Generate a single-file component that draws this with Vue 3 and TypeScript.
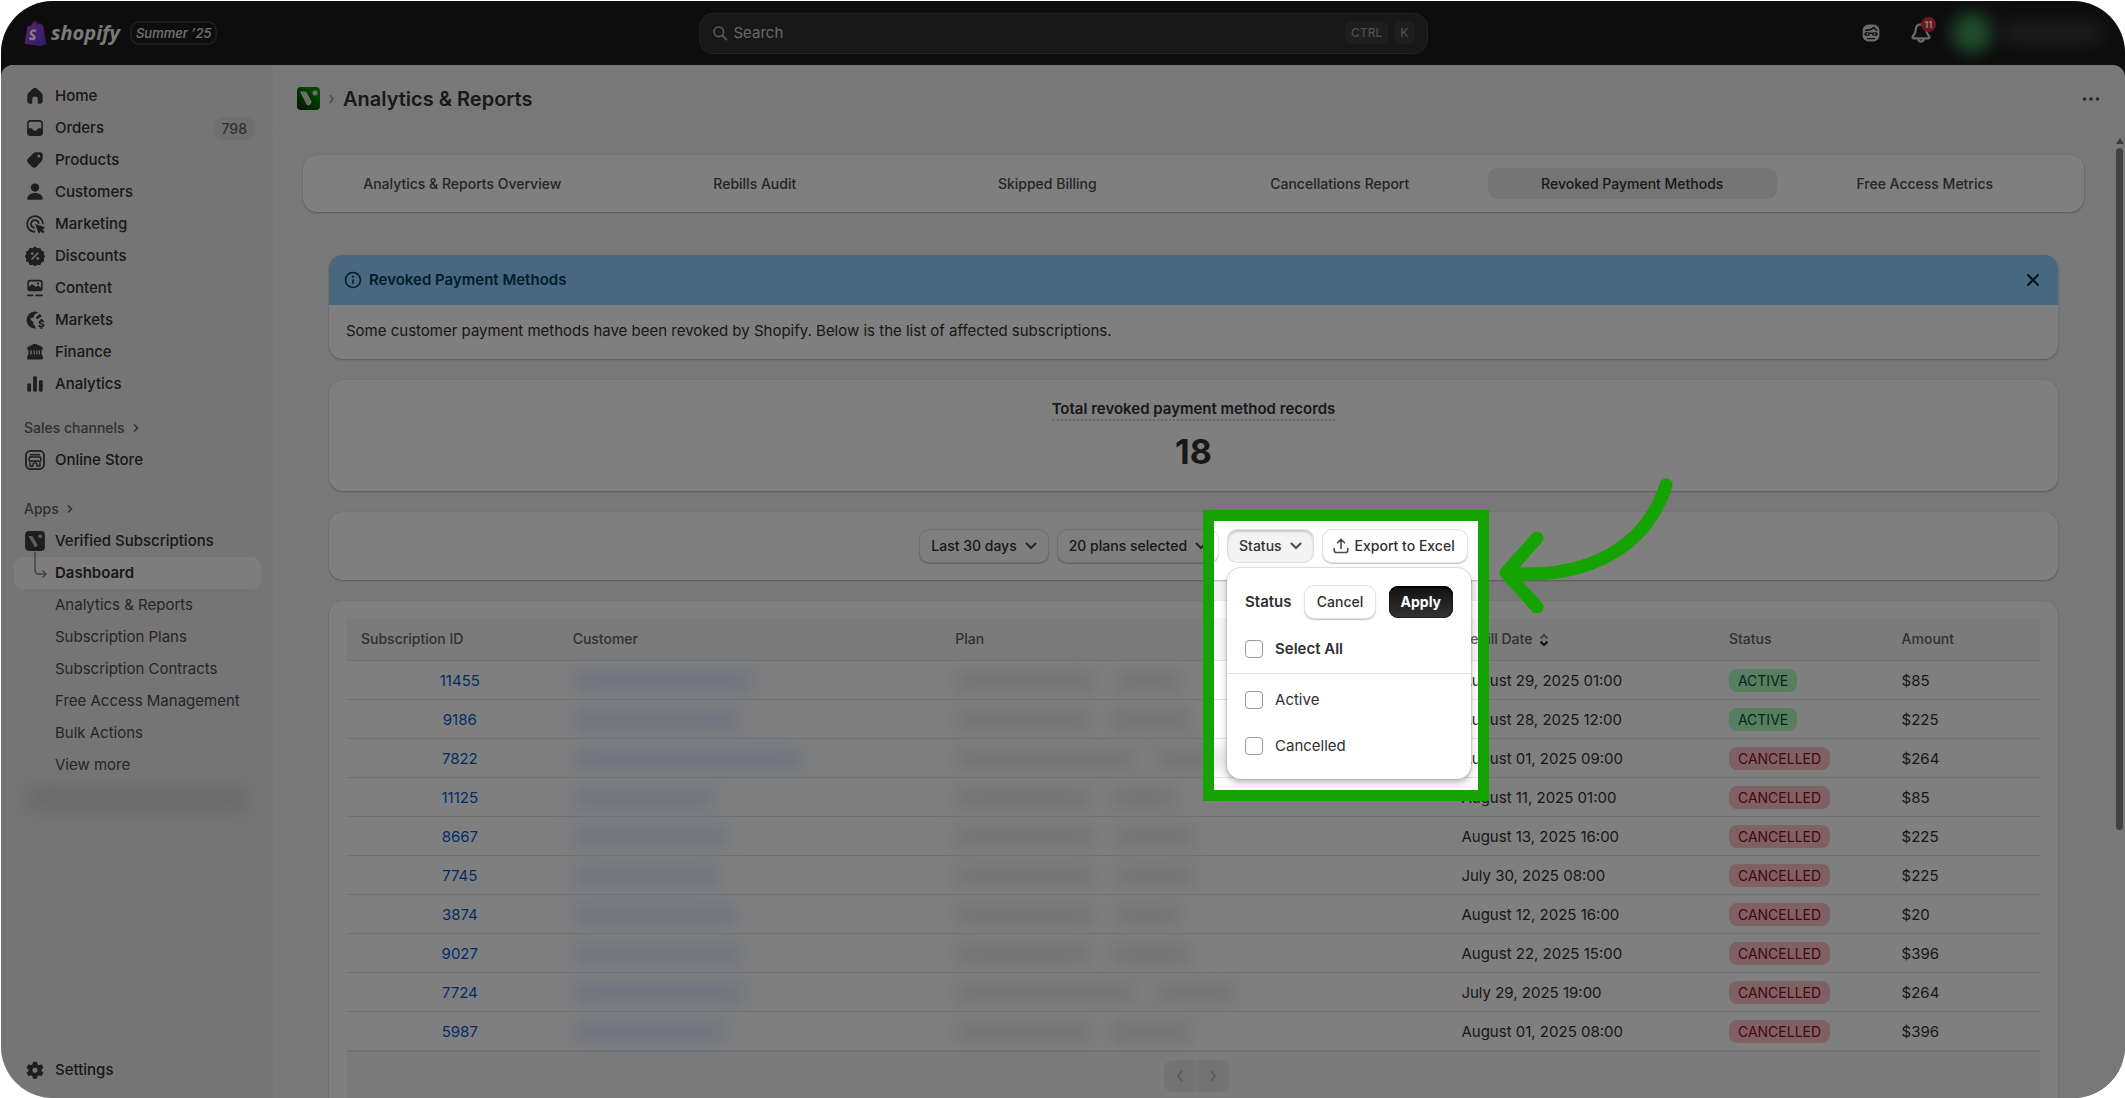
<script setup lang="ts">
import { ref } from 'vue'

interface NavItem { label: string; icon: string; badge?: string }
interface Row {
  id: string
  date: string
  status: 'ACTIVE' | 'CANCELLED'
  amount: string
  customer: number
  plan: [number, number]
}

const nav: NavItem[] = [
  { label: 'Home', icon: 'home' },
  { label: 'Orders', icon: 'orders', badge: '798' },
  { label: 'Products', icon: 'products' },
  { label: 'Customers', icon: 'customers' },
  { label: 'Marketing', icon: 'marketing' },
  { label: 'Discounts', icon: 'discounts' },
  { label: 'Content', icon: 'content' },
  { label: 'Markets', icon: 'markets' },
  { label: 'Finance', icon: 'finance' },
  { label: 'Analytics', icon: 'analytics' },
]

const appLinks = [
  'Analytics & Reports',
  'Subscription Plans',
  'Subscription Contracts',
  'Free Access Management',
  'Bulk Actions',
  'View more',
]

const tabs = [
  'Analytics & Reports Overview',
  'Rebills Audit',
  'Skipped Billing',
  'Cancellations Report',
  'Revoked Payment Methods',
  'Free Access Metrics',
]
const activeTab = ref('Revoked Payment Methods')

const rows: Row[] = [
  { id: '11455', date: 'August 29, 2025 01:00', status: 'ACTIVE', amount: '$85', customer: 180, plan: [140, 66] },
  { id: '9186', date: 'August 28, 2025 12:00', status: 'ACTIVE', amount: '$225', customer: 166, plan: [136, 80] },
  { id: '7822', date: 'August 01, 2025 09:00', status: 'CANCELLED', amount: '$264', customer: 230, plan: [180, 80] },
  { id: '11125', date: 'August 11, 2025 01:00', status: 'CANCELLED', amount: '$85', customer: 142, plan: [136, 66] },
  { id: '8667', date: 'August 13, 2025 16:00', status: 'CANCELLED', amount: '$225', customer: 154, plan: [140, 80] },
  { id: '7745', date: 'July 30, 2025 08:00', status: 'CANCELLED', amount: '$225', customer: 146, plan: [140, 80] },
  { id: '3874', date: 'August 12, 2025 16:00', status: 'CANCELLED', amount: '$20', customer: 164, plan: [140, 66] },
  { id: '9027', date: 'August 22, 2025 15:00', status: 'CANCELLED', amount: '$396', customer: 168, plan: [136, 80] },
  { id: '7724', date: 'July 29, 2025 19:00', status: 'CANCELLED', amount: '$264', customer: 172, plan: [180, 80] },
  { id: '5987', date: 'August 01, 2025 08:00', status: 'CANCELLED', amount: '$396', customer: 154, plan: [136, 80] },
]

const selectAll = ref(false)
const statuses = ref([
  { label: 'Active', checked: false },
  { label: 'Cancelled', checked: false },
])
</script>

<template>
  <div class="frame">
    <header class="topbar">
      <div class="brand">
        <svg class="bag" viewBox="0 0 24 28" aria-hidden="true">
          <defs>
            <linearGradient id="bagFill" x1="0" y1="0" x2="1" y2="1">
              <stop offset="0" stop-color="#c04fd8" />
              <stop offset="1" stop-color="#5a34d6" />
            </linearGradient>
          </defs>
          <path d="M3.5 7 L8 5.5 C8.6 2.6 10.2 1 12 1.2 C13 1.4 13.8 2.6 14.2 4 L17 3.4 L20 5.6 L23.4 25.4 L16.5 27 L0.6 24.6 Z" fill="url(#bagFill)" />
          <path d="M7.6 6.5 C8 3.6 9.8 2 11.4 2.2 C12.6 2.6 13.1 4.2 13.2 6.2" fill="none" stroke="#7a2a86" stroke-width="1.1" />
          <path d="M12.6 11.4 C10.8 10.4 7.4 10.8 7.2 13.2 C7.1 15.8 11 15.9 10.9 18.2 C10.8 20.2 8 20.4 5.6 18.6" fill="none" stroke="#fff" stroke-width="2.6" />
        </svg>
        <span class="wordmark">shopify</span>
        <span class="edition">Summer ’25</span>
      </div>
      <label class="search">
        <svg viewBox="0 0 20 20" class="search-icon" aria-hidden="true">
          <circle cx="8.5" cy="8.5" r="6" /><path d="M13 13l5 5.4" />
        </svg>
        <input type="text" placeholder="Search" aria-label="Search" />
        <kbd>CTRL</kbd><kbd>K</kbd>
      </label>
      <div class="account">
        <button class="icon-btn" aria-label="Assistant">
          <svg viewBox="0 0 20 20" class="sidekick" aria-hidden="true">
            <rect x="1.6" y="1.4" width="16.8" height="17.2" rx="6" fill="#d9d9d9" />
            <path d="M4 7.2 C7 7.4 11 6.6 13 4.6 C13.6 6 15 7 16.4 7.2" fill="none" stroke="#1a1a1a" stroke-width="1.4" />
            <rect x="3.4" y="9.2" width="5.4" height="3.6" rx="1.6" fill="#1a1a1a" />
            <rect x="11.2" y="9.2" width="5.4" height="3.6" rx="1.6" fill="#1a1a1a" />
            <path d="M8.5 10.2h3M6 15.6h8" stroke="#1a1a1a" stroke-width="1.4" />
            <circle cx="6.4" cy="11" r=".9" fill="#d9d9d9" /><circle cx="13.6" cy="11" r=".9" fill="#d9d9d9" />
          </svg>
        </button>
        <button class="icon-btn bell-btn" aria-label="Notifications">
          <svg viewBox="0 0 20 20" class="bell" aria-hidden="true">
            <path d="M10 2.2c-3 0-4.6 2.2-4.8 4.8-.1 2-.5 3.400-1.6 4.600-.9 1-1.300 1.600-1.300 2.300 0 .6.4.9 1 .9h13.400c.6 0 1-.3 1-.9 0-.7-.4-1.300-1.300-2.300-1.100-1.200-1.500-2.600-1.600-4.600C14.600 4.400 13 2.200 10 2.200z" />
            <path d="M7.400 15.200c.3 1.700 1.300 2.600 2.600 2.600s2.300-.9 2.600-2.600" />
          </svg>
          <span class="count">11</span>
        </button>
        <span class="avatar-blur"></span>
        <span class="name-blur"></span>
      </div>
    </header>

    <div class="body">
      <nav class="sidebar">
        <a v-for="item in nav" :key="item.label" href="#" class="nav-item">
          <svg class="nav-icon" viewBox="0 0 20 20" aria-hidden="true">
            <path v-if="item.icon === 'home'" d="M8.300 3.200a2.500 2.500 0 0 1 3.400 0l4.300 4c.6.6 1 1.400 1 2.300v5A2.500 2.500 0 0 1 14.500 17H13.200a.7.7 0 0 1-.7-.7V13a2.500 2.500 0 0 0-5 0v3.300a.7.7 0 0 1-.7.7H5.500A2.500 2.500 0 0 1 3 14.500v-5c0-.9.4-1.700 1-2.300z" />
            <path v-else-if="item.icon === 'orders'" fill-rule="evenodd" d="M6 2.700h8A3.200 3.200 0 0 1 17.200 5.900v8.200A3.200 3.200 0 0 1 14 17.300H6a3.200 3.200 0 0 1-3.200-3.200V5.900A3.200 3.200 0 0 1 6 2.700zM4.300 6v4.300h2.200c.6 0 1 .3 1.300.8.4.9 1 1.300 2.200 1.300s1.800-.4 2.200-1.300c.3-.5.7-.8 1.300-.8h2.200V6c0-1-.7-1.700-1.700-1.700H6C5 4.300 4.300 5 4.300 6z" />
            <path v-else-if="item.icon === 'products'" fill-rule="evenodd" d="M11 3h3.500A2.500 2.500 0 0 1 17 5.500V8.500c0 1-.4 2-1.100 2.700l-4.600 4.900a2.800 2.800 0 0 1-4 0L3.800 12.700a2.800 2.800 0 0 1 0-4L8.300 4.200A3.800 3.800 0 0 1 11 3zm2.500 4.800a1.300 1.300 0 1 0 0-2.600 1.300 1.300 0 0 0 0 2.600z" />
            <g v-else-if="item.icon === 'customers'">
              <circle cx="10" cy="6" r="3.700" />
              <path d="M2.900 15.700c.7-3 3.500-4.700 7.100-4.700s6.400 1.700 7.100 4.700c.2.800-.3 1.300-1 1.300H3.900c-.7 0-1.200-.5-1-1.300z" />
            </g>
            <g v-else-if="item.icon === 'marketing'">
              <path class="line" d="M17.200 9.500A7.200 7.200 0 1 0 9.500 17.200" />
              <path class="line" d="M13.300 9.200A3.500 3.500 0 1 0 9 13.300" />
              <path d="M10.200 9.900l8.200 2.800c.7.300.6.900.1 1.200l-1.600 1 1.700 1.900-1.500 1.500-1.900-1.800-1.100 1.700c-.3.500-1 .4-1.200-.2z" />
            </g>
            <g v-else-if="item.icon === 'discounts'">
              <path d="M10 1.200l2.100 1.700 2.700-.4 1 2.600 2.500 1-.4 2.500 1.500 1.700-1.500 2 .4 2.500-2.500 1-1 2.500-2.700-.4-2.100 1.500-2.100-1.500-2.700.4-1-2.500-2.500-1 .4-2.500-1.500-2 1.500-1.700-.4-2.500 2.500-1 1-2.600 2.700.4z" />
              <path class="cut" d="M7.300 12.700l5.400-5.400" />
              <circle cx="7.500" cy="7.700" r="1.200" class="hole" /><circle cx="12.500" cy="12.300" r="1.200" class="hole" />
            </g>
            <g v-else-if="item.icon === 'content'">
              <path fill-rule="evenodd" d="M5.500 2.500h9A2.500 2.500 0 0 1 17 5v5.500a2.500 2.500 0 0 1-2.500 2.500h-9A2.500 2.500 0 0 1 3 10.500V5a2.500 2.500 0 0 1 2.500-2.500zM4.500 9l2-1.700c.6-.5 1.300-.5 1.900 0L10.500 9l1.300-.8c.6-.4 1.200-.3 1.700.1l2 1.400V5.300c0-.8-.5-1.300-1.300-1.300H5.800C5 4 4.500 4.500 4.500 5.300zM12.700 7a1 1 0 1 0 0-2 1 1 0 0 0 0 2z" />
              <path class="line" d="M3.500 16.700h4.200M11 16.700h5.500" />
            </g>
            <g v-else-if="item.icon === 'markets'">
              <path d="M10 2.300a7.700 7.700 0 1 0 1.200 15.300c-1-.7-1.500-1.700-1.100-2.400-1.300-.4-2-1.500-1.500-3L6.200 9.800c-.6-.6-.4-1.400.4-1.600l2-.5c.4-2.300 1.700-3.700 4.700-4.200A7.700 7.700 0 0 0 10 2.300z" />
              <path d="M14.200 4.300l-3.700 3.900 1.700 1 3.900-2.700z" />
              <path class="line" d="M17.600 11.500c-.7-.8-3.600-1-3.600.6 0 1.700 3.800.9 3.800 2.700 0 1.600-3.200 1.500-4 .5M15.800 9.600v1.200M15.800 16v1.400" />
            </g>
            <g v-else-if="item.icon === 'finance'">
              <path fill-rule="evenodd" d="M9 2.700a2.400 2.400 0 0 1 2 0l5.200 2.500c.6.300.8.700.8 1.300v.8c0 .5-.3.900-.8.900H16v4.300c.7.300 1.100 1 1.100 1.800v1.500c0 .6-.4 1-1 1H3.900c-.6 0-1-.4-1-1v-1.500c0-.8.4-1.500 1.100-1.800V8.200h-.2c-.5 0-.8-.4-.8-.9v-.8c0-.6.2-1 .8-1.300zM5.800 8.500v3.700h1.200V8.500zm3 0v3.700h1V8.500zm2.400 0v3.700h1V8.500zm2.200 0v3.700h1V8.500z" />
            </g>
            <g v-else>
              <rect x="3" y="9.500" width="3.400" height="7.500" rx="1" /><rect x="8.300" y="3" width="3.400" height="14" rx="1" /><rect x="13.600" y="6.500" width="3.400" height="10.500" rx="1" />
            </g>
          </svg>
          <span>{{ item.label }}</span>
          <span v-if="item.badge" class="nav-badge">{{ item.badge }}</span>
        </a>

        <a href="#" class="nav-heading sales">Sales channels
          <svg viewBox="0 0 8 10" class="mini-chev" aria-hidden="true"><path d="M2 1.500l3.500 3.500L2 8.500" /></svg>
        </a>
        <a href="#" class="nav-item">
          <svg class="nav-icon" viewBox="0 0 20 20" aria-hidden="true">
            <rect class="line" x="1.800" y="1.800" width="16.400" height="16.400" rx="4" />
            <path class="thin" d="M5.500 5.200h9M5.300 7.300l-.8 2.400c0 2 2.700 2 2.700.2 0 1.800 2.800 1.800 2.800 0 0 1.800 2.800 1.800 2.800 0 0 1.800 2.700 1.800 2.700-.2l-.8-2.400zM5.500 12v3.500h2.700v-2c0-1.200 3.600-1.200 3.600 0v2h2.700V12" />
          </svg>
          <span>Online Store</span>
        </a>

        <a href="#" class="nav-heading apps">Apps
          <svg viewBox="0 0 8 10" class="mini-chev" aria-hidden="true"><path d="M2 1.500l3.500 3.500L2 8.500" /></svg>
        </a>
        <a href="#" class="nav-item">
          <svg class="nav-icon" viewBox="0 0 20 20" aria-hidden="true">
            <rect x="1" y="1" width="18" height="18" rx="3.500" />
            <path d="M4 5.500h3.600l4.800 8.200c-.6 1.500-1.400 2-2.500 2z" fill="#bbb" /><circle cx="14.800" cy="5.700" r="1.700" fill="#bbb" />
          </svg>
          <span>Verified Subscriptions</span>
        </a>
        <a href="#" class="nav-item selected">
          <svg class="tree" viewBox="0 0 16 30" aria-hidden="true"><path d="M3 1v18c0 2.500 1 4 3.500 4H14M10.500 19.500L14 23l-3.500 3.500" /></svg>
          <span>Dashboard</span>
        </a>
        <a v-for="link in appLinks" :key="link" href="#" class="nav-item sub">{{ link }}</a>
        <span class="nav-blur"></span>

        <a href="#" class="nav-item settings">
          <svg class="nav-icon" viewBox="0 0 20 20" aria-hidden="true">
            <path fill-rule="evenodd" d="M8.200 2.500h3.600l.5 2.300 1.300.8 2.300-.8 1.800 3.100-1.800 1.600v1.400l1.800 1.600-1.800 3.100-2.300-.8-1.300.8-.5 2.300H8.200l-.5-2.300-1.300-.8-2.300.8-1.800-3.100 1.800-1.600V9.500L2.300 7.900l1.800-3.100 2.300.8 1.300-.8zM10 12.500a2.300 2.300 0 1 0 0-4.600 2.300 2.300 0 0 0 0 4.600z" />
          </svg>
          <span>Settings</span>
        </a>
      </nav>

      <main class="main">
        <div class="titlebar">
          <svg class="app-icon" viewBox="0 0 23 23" aria-hidden="true">
            <defs>
              <linearGradient id="appFill" x1="1" y1="0" x2="0.200" y2="1">
                <stop offset="0" stop-color="#08a808" /><stop offset="1" stop-color="#033603" />
              </linearGradient>
            </defs>
            <rect width="23" height="23" rx="4" fill="url(#appFill)" />
            <path d="M3 4.500h5c.8 0 1.300.3 1.700 1l5 9.300c-.8 2.200-2 3.600-3.400 3.600-1 0-1.500-.4-2-1.400z" fill="#ddd" />
            <circle cx="18" cy="6" r="2.500" fill="#ddd" />
          </svg>
          <svg viewBox="0 0 8 10" class="crumb" aria-hidden="true"><path d="M2 1l3 4-3 4" /></svg>
          <h1>Analytics &amp; Reports</h1>
          <button class="more" aria-label="More actions">
            <svg viewBox="0 0 18 6" aria-hidden="true"><circle cx="2.500" cy="3" r="1.800" /><circle cx="9" cy="3" r="1.800" /><circle cx="15.500" cy="3" r="1.800" /></svg>
          </button>
        </div>

        <div class="scroller">
          <div class="content">
            <div class="tabs" role="tablist">
              <button v-for="t in tabs" :key="t" role="tab" class="tab" :class="{ active: t === activeTab }" :aria-selected="t === activeTab" @click="activeTab = t">{{ t }}</button>
            </div>

            <div class="stack">
              <section class="banner">
                <div class="banner-head">
                  <svg class="info" viewBox="0 0 20 20" aria-hidden="true">
                    <circle cx="10" cy="10" r="7.500" /><path d="M10 9.500v4.300" /><circle class="dot" cx="10" cy="6.700" r="1" />
                  </svg>
                  <h2>Revoked Payment Methods</h2>
                  <button class="close" aria-label="Dismiss"><svg viewBox="0 0 14 14" aria-hidden="true"><path d="M1.500 1.500l11 11M12.500 1.500l-11 11" /></svg></button>
                </div>
                <p>Some customer payment methods have been revoked by Shopify. Below is the list of affected subscriptions.</p>
              </section>

              <section class="card total">
                <h3>Total revoked payment method records</h3>
                <p>18</p>
              </section>

              <section class="card filters">
                <button class="btn">Last 30 days
                  <svg class="chev" viewBox="0 0 12 8" aria-hidden="true"><path d="M1.500 1.500L6 6l4.500-4.500" /></svg>
                </button>
                <button class="btn">20 plans selected
                  <svg class="chev" viewBox="0 0 12 8" aria-hidden="true"><path d="M1.500 1.500L6 6l4.500-4.500" /></svg>
                </button>
                <div class="status-filter">
                  <button class="btn pressed" aria-expanded="true">Status
                    <svg class="chev" viewBox="0 0 12 8" aria-hidden="true"><path d="M1.500 1.500L6 6l4.500-4.500" /></svg>
                  </button>
                  <div class="spotlight"></div>
                  <div class="popover">
                    <div class="pop-head">
                      <strong>Status</strong>
                      <button class="btn">Cancel</button>
                      <button class="btn primary">Apply</button>
                    </div>
                    <label class="option all"><input v-model="selectAll" type="checkbox" />Select All</label>
                    <label v-for="s in statuses" :key="s.label" class="option"><input v-model="s.checked" type="checkbox" />{{ s.label }}</label>
                  </div>
                  <svg class="arrow" viewBox="0 0 184 140" aria-hidden="true">
                    <path d="M172 12C156 64 106 108 12 100M43 65L12 100l31 34" />
                  </svg>
                </div>
                <button class="btn export">
                  <svg class="upload" viewBox="0 0 16 16" aria-hidden="true"><path d="M8 10.500V1.500M4.500 4.800L8 1.300l3.500 3.500M1.200 10.500v1.700c0 1.300.8 2.300 2.300 2.300h9c1.500 0 2.300-1 2.300-2.300v-1.700" /></svg>
                  Export to Excel
                </button>
              </section>

              <section class="card list">
                <table>
                  <colgroup><col class="c1" /><col class="c2" /><col class="c3" /><col class="c4" /><col class="c5" /><col class="c6" /></colgroup>
                  <thead>
                    <tr>
                      <th>Subscription ID</th>
                      <th>Customer</th>
                      <th>Plan</th>
                      <th>Rebill Date
                        <svg class="sort" viewBox="0 0 10 14" aria-hidden="true"><path class="up" d="M1.500 5.500L5 2l3.500 3.500" /><path d="M1.500 8.500L5 12l3.500-3.500" /></svg>
                      </th>
                      <th>Status</th>
                      <th>Amount</th>
                    </tr>
                  </thead>
                  <tbody>
                    <tr v-for="r in rows" :key="r.id">
                      <td class="id"><a href="#">{{ r.id }}</a></td>
                      <td><span class="smudge blue" :style="{ width: r.customer + 'px' }"></span></td>
                      <td>
                        <span class="smudges">
                          <span class="smudge" :style="{ width: r.plan[0] + 'px' }"></span>
                          <span class="smudge" :style="{ width: r.plan[1] + 'px' }"></span>
                        </span>
                      </td>
                      <td>{{ r.date }}</td>
                      <td><span class="pill" :class="r.status.toLowerCase()">{{ r.status }}</span></td>
                      <td>{{ r.amount }}</td>
                    </tr>
                  </tbody>
                </table>
                <div class="pager">
                  <button aria-label="Previous" disabled><svg viewBox="0 0 8 12" aria-hidden="true"><path d="M6 1L2 6l4 5" /></svg></button>
                  <button aria-label="Next" disabled><svg viewBox="0 0 8 12" aria-hidden="true"><path d="M2 1l4 5-4 5" /></svg></button>
                </div>
              </section>
            </div>
          </div>
          <div class="scrollbar">
            <svg viewBox="0 0 8 6" aria-hidden="true"><path d="M4 0l4 6H0z" /></svg>
            <div class="thumb"></div>
          </div>
        </div>
      </main>
    </div>
  </div>
</template>

<style>
body {
  background: #fff;
}
#app {
  height: 100vh;
  overflow: hidden;
  padding: 1px 0 0 1px;
  box-sizing: border-box;
}
</style>

<style scoped>
.frame,
.frame * {
  box-sizing: border-box;
}
.frame {
  height: 100%;
  display: flex;
  flex-direction: column;
  overflow: hidden;
  border-radius: 52px;
  background: #1a1a1a;
  color: #303030;
  font: 400 15px/20px Inter, "Liberation Sans", sans-serif;
}
button,
input {
  font: inherit;
  color: inherit;
}
button {
  border: 0;
  background: none;
  padding: 0;
}
a {
  color: inherit;
  text-decoration: none;
}
h1, h2, h3, p {
  margin: 0;
}
svg {
  display: block;
  flex: none;
}

/* Top bar */
.topbar {
  flex: none;
  height: 64px;
  padding: 0 23px;
  display: grid;
  grid-template-columns: 1fr 729px 1fr;
  align-items: center;
}
.brand {
  display: flex;
  align-items: center;
}
.bag {
  width: 23px;
  height: 27px;
}
.wordmark {
  margin: 0 10px 0 4px;
  font: italic 700 20px/28px "Open Sans", sans-serif;
  color: #f4f4f4;
}
.edition {
  height: 24px;
  padding: 0 4px;
  border: 2px solid #3a3a3a;
  border-radius: 9px;
  font-style: italic;
  font-weight: 500;
  font-size: 13px;
  line-height: 20px;
  color: #e3e3e3;
}
.search {
  height: 41px;
  padding: 0 12px;
  display: flex;
  align-items: center;
  gap: 6px;
  background: #303030;
  border: 1px solid #444;
  border-radius: 14px;
}
.search-icon {
  width: 16px;
  height: 16px;
  fill: none;
  stroke: #b5b5b5;
  stroke-width: 2;
  stroke-linecap: round;
}
.search input {
  flex: 1;
  min-width: 0;
  padding: 0;
  border: 0;
  outline: 0;
  background: none;
  color: #d0d0d0;
}
.search input::placeholder {
  color: #d0d0d0;
  opacity: 1;
}
kbd {
  height: 22px;
  padding: 0 6px;
  border-radius: 5px;
  background: #3c3c3c;
  color: #9a9a9a;
  font: 500 12px/22px Inter, sans-serif;
}
.account {
  display: flex;
  align-items: center;
  justify-content: flex-end;
}
.sidekick {
  width: 20px;
  height: 20px;
}
.bell-btn {
  position: relative;
  margin: 0 20px 0 29px;
}
.bell {
  width: 22px;
  height: 22px;
  fill: none;
  stroke: #d9d9d9;
  stroke-width: 2;
}
.count {
  position: absolute;
  left: 11px;
  top: -5px;
  width: 15px;
  height: 15px;
  border-radius: 8px;
  background: #e22c38;
  color: #fff;
  font-size: 9px;
  font-weight: 700;
  line-height: 15px;
}
.avatar-blur {
  width: 40px;
  height: 40px;
  border-radius: 20px;
  background: #3f9a59;
  filter: blur(8px);
}
.name-blur {
  width: 100px;
  height: 14px;
  margin-left: 10px;
  background: #4a4a4a;
  filter: blur(10px);
}

/* Body */
.body {
  flex: 1;
  min-height: 0;
  display: flex;
  border-radius: 12px 12px 0 0;
  background: #f1f1f1;
}
.sidebar {
  flex: none;
  width: 272px;
  padding: 15px 12px 12px 13px;
  display: flex;
  flex-direction: column;
  background: #ebebeb;
  border-radius: 12px 0 0 0;
}
.nav-item {
  position: relative;
  flex: none;
  height: 32px;
  padding: 0 6px 0 10px;
  display: flex;
  align-items: center;
  gap: 9px;
  font-weight: 500;
  border-radius: 9px;
}
.nav-icon {
  width: 22px;
  height: 22px;
  fill: #3d3d3d;
}
.nav-icon .line {
  fill: none;
  stroke: #3d3d3d;
  stroke-width: 1.6;
  stroke-linecap: round;
}
.nav-icon .thin {
  fill: none;
  stroke: #3d3d3d;
  stroke-width: 1.3;
}
.nav-icon .cut {
  stroke: #ebebeb;
  stroke-width: 1.4;
  stroke-linecap: round;
}
.nav-icon .hole {
  fill: #ebebeb;
}
.nav-badge {
  margin-left: auto;
  height: 23px;
  padding: 0 8px;
  border-radius: 9px;
  background: #dedede;
  font-size: 14px;
  line-height: 23px;
  color: #616161;
}
.nav-heading {
  flex: none;
  height: 32px;
  padding-left: 10px;
  display: flex;
  align-items: center;
  gap: 7px;
  font-size: 14px;
  font-weight: 500;
  color: #616161;
}
.sales {
  margin-top: 12px;
}
.apps {
  margin-top: 17px;
}
.mini-chev {
  width: 8px;
  height: 10px;
  fill: none;
  stroke: #616161;
  stroke-width: 1.6;
}
.selected {
  padding-left: 41px;
  background: #fafafa;
  font-weight: 600;
}
.tree {
  position: absolute;
  left: 18px;
  top: -6px;
  width: 16px;
  height: 30px;
  fill: none;
  stroke: #8a8a8a;
  stroke-width: 1.5;
}
.sub {
  padding-left: 41px;
  font-weight: 400;
  color: #4a4a4a;
}
.nav-blur {
  flex: none;
  height: 20px;
  margin: 8px 14px 0 12px;
  background: #cfcfcf;
  filter: blur(10px);
}
.settings {
  margin-top: auto;
}

.main {
  flex: 1;
  min-width: 0;
  display: flex;
  flex-direction: column;
}
.titlebar {
  flex: none;
  height: 66px;
  padding: 2px 25px 0 24px;
  display: flex;
  align-items: center;
  border-bottom: 1px solid #ebebeb;
}
.app-icon {
  width: 23px;
  height: 23px;
}
.crumb {
  width: 8px;
  height: 10px;
  margin: 0 7px 0 8px;
  fill: none;
  stroke: #9a9a9a;
  stroke-width: 1.5;
}
h1 {
  font-size: 20px;
  font-weight: 600;
  line-height: 26px;
}
.more {
  margin-left: auto;
}
.more svg {
  width: 18px;
  height: 6px;
  fill: #4a4a4a;
}
.scroller {
  flex: 1;
  min-height: 0;
  display: flex;
}
.content {
  flex: 1;
  min-width: 0;
  padding: 24px 30px 0;
}
.scrollbar {
  flex: none;
  width: 11px;
  padding-top: 7px;
  display: flex;
  flex-direction: column;
  align-items: center;
  gap: 4px;
}
.scrollbar svg {
  width: 8px;
  height: 6px;
  fill: #777;
}
.thumb {
  width: 7px;
  height: 71%;
  border-radius: 4px;
  background: #858585;
}

.tabs,
.card,
.banner {
  border-radius: 14px;
  background: #fff;
  box-shadow: 0 1px 2px rgba(0, 0, 0, 0.25), 0 0 1px rgba(0, 0, 0, 0.2);
}
.tabs {
  height: 57px;
  padding: 13px 15px;
  display: flex;
  gap: 4px;
}
.tab {
  flex: 1 1 0;
  border-radius: 9px;
  font-size: 14px;
  font-weight: 500;
  color: #4a4a4a;
}
.tab.active {
  background: #ebebeb;
  color: #303030;
}
.stack {
  margin: 43px 26px 0;
  display: flex;
  flex-direction: column;
  gap: 21px;
}
.banner-head {
  height: 50px;
  padding: 0 18px 0 14px;
  display: flex;
  align-items: center;
  gap: 6px;
  border-radius: 14px 14px 0 0;
  background: #91d0ff;
  color: #003a5a;
}
.banner h2 {
  font-size: 15px;
  font-weight: 600;
  line-height: 20px;
}
.info {
  width: 20px;
  height: 20px;
  fill: none;
  stroke: #003a5a;
  stroke-width: 1.6;
}
.info .dot {
  fill: #003a5a;
  stroke: none;
}
.close {
  margin-left: auto;
}
.close svg {
  width: 14px;
  height: 14px;
  fill: none;
  stroke: #002133;
  stroke-width: 2;
}
.banner p {
  padding: 16px 17px 18px;
}
.total {
  height: 111px;
  padding-top: 19px;
  text-align: center;
}
.total h3 {
  display: inline-block;
  font-size: 15px;
  font-weight: 600;
  line-height: 20px;
  border-bottom: 2px dotted #ccc;
}
.total p {
  margin-top: 10px;
  font-size: 34px;
  font-weight: 700;
  line-height: 42px;
}

/* Filters */
.filters {
  padding: 18px;
  display: flex;
  justify-content: center;
  gap: 10px;
}
.btn {
  height: 32px;
  padding: 0 11px;
  display: flex;
  align-items: center;
  gap: 8px;
  border-radius: 9px;
  background: #fff;
  box-shadow: 0 0 0 1px #e3e3e3, 0 1px 1px 1px #c4c4c4;
  font-size: 14px;
  font-weight: 500;
  white-space: nowrap;
}
.chev {
  width: 12px;
  height: 8px;
  fill: none;
  stroke: #4a4a4a;
  stroke-width: 2;
  stroke-linecap: round;
}
.pressed {
  background: #f3f3f3;
  box-shadow: inset 0 2px 2px #ccc, 0 0 0 1px #ddd;
}
.export {
  gap: 6px;
  padding: 0 12px 0 10px;
}
.upload {
  width: 16px;
  height: 16px;
  fill: none;
  stroke: #4a4a4a;
  stroke-width: 1.6;
  stroke-linecap: round;
}
.status-filter {
  position: relative;
}
.spotlight {
  position: absolute;
  z-index: 10;
  left: -25px;
  top: -20px;
  width: 286px;
  height: 291px;
  border: 11px solid #14a300;
  box-shadow: 0 0 0 3000px rgba(0, 0, 0, 0.5);
  pointer-events: none;
}
.popover {
  position: absolute;
  z-index: 5;
  left: -1px;
  top: 38px;
  width: 244px;
  padding: 18px 0 10px;
  border-radius: 14px;
  background: #fff;
  box-shadow: 0 0 1px 1px rgba(0, 0, 0, 0.12), 0 4px 7px rgba(0, 0, 0, 0.25);
}
.pop-head {
  display: flex;
  align-items: center;
  justify-content: space-between;
  padding: 0 18px;
}
.pop-head strong {
  font-weight: 600;
}
.pop-head .btn {
  padding: 0 12px;
}
.pop-head .primary {
  background: linear-gradient(#111, #333);
  color: #fff;
  font-weight: 700;
  box-shadow: inset 0 2px 1px #000, inset 0 0 0 1px #222;
}
.option {
  height: 46px;
  padding: 0 18px;
  display: flex;
  align-items: center;
  gap: 12px;
}
.option.all {
  height: 56px;
  padding-top: 6px;
  margin-bottom: 3px;
  border-bottom: 1px solid #e3e6e6;
  font-weight: 600;
}
.option input {
  appearance: none;
  width: 18px;
  height: 18px;
  margin: 0;
  border: 1px solid #999;
  border-radius: 4px;
  background: #fdfdfd;
}
.arrow {
  position: absolute;
  z-index: 11;
  left: 266px;
  top: -57px;
  width: 184px;
  height: 140px;
  fill: none;
  stroke: #14a300;
  stroke-width: 13;
  stroke-linecap: round;
  stroke-linejoin: round;
}

/* Table */
.list {
  padding: 17px 18px;
}
table {
  width: 100%;
  table-layout: fixed;
  border-collapse: collapse;
}
.c1 { width: 12.5%; }
.c2 { width: 22.6%; }
.c3 { width: 29.9%; }
.c4 { width: 15.8%; }
.c5 { width: 10.2%; }
.c6 { width: 9%; }
th {
  height: 42px;
  padding: 0 14px;
  background: #f7f7f7;
  font-size: 14px;
  font-weight: 500;
  text-align: left;
  color: #616161;
  white-space: nowrap;
}
td {
  height: 39px;
  padding: 2px 14px 0;
  border-top: 1px solid #e3e3e3;
  white-space: nowrap;
}
td.id {
  padding-left: 28px;
  text-align: center;
  color: #005bd3;
}
.sort {
  display: inline-block;
  vertical-align: middle;
  width: 10px;
  height: 14px;
  margin-left: 3px;
  fill: none;
  stroke: #1a1a1a;
  stroke-width: 2;
}
.sort .up {
  stroke: #8a8a8a;
}
.smudges {
  display: flex;
  gap: 20px;
}
.smudge {
  display: block;
  height: 20px;
  background: #e4e4e4;
  filter: blur(9px);
}
.blue {
  background: #dbe5fb;
}
.pill {
  display: inline-block;
  height: 23px;
  padding: 0 9px;
  border-radius: 8px;
  font-size: 14px;
  line-height: 23px;
  vertical-align: middle;
}
.active.pill {
  background: #affebf;
  color: #014b40;
}
.cancelled {
  background: #fec1c7;
  color: #8e0b21;
}
.pager {
  height: 60px;
  padding: 8px 0 0 5px;
  display: flex;
  justify-content: center;
  gap: 1px;
  border-top: 2px solid #e3e3e3;
  background: #f7f7f7;
}
.pager button {
  width: 32px;
  height: 32px;
  display: grid;
  place-items: center;
  background: #e6e6e6;
  border-radius: 9px 0 0 9px;
}
.pager button:last-child {
  border-radius: 0 9px 9px 0;
}
.pager svg {
  width: 8px;
  height: 12px;
  fill: none;
  stroke: #b5b5b5;
  stroke-width: 2;
}
</style>
